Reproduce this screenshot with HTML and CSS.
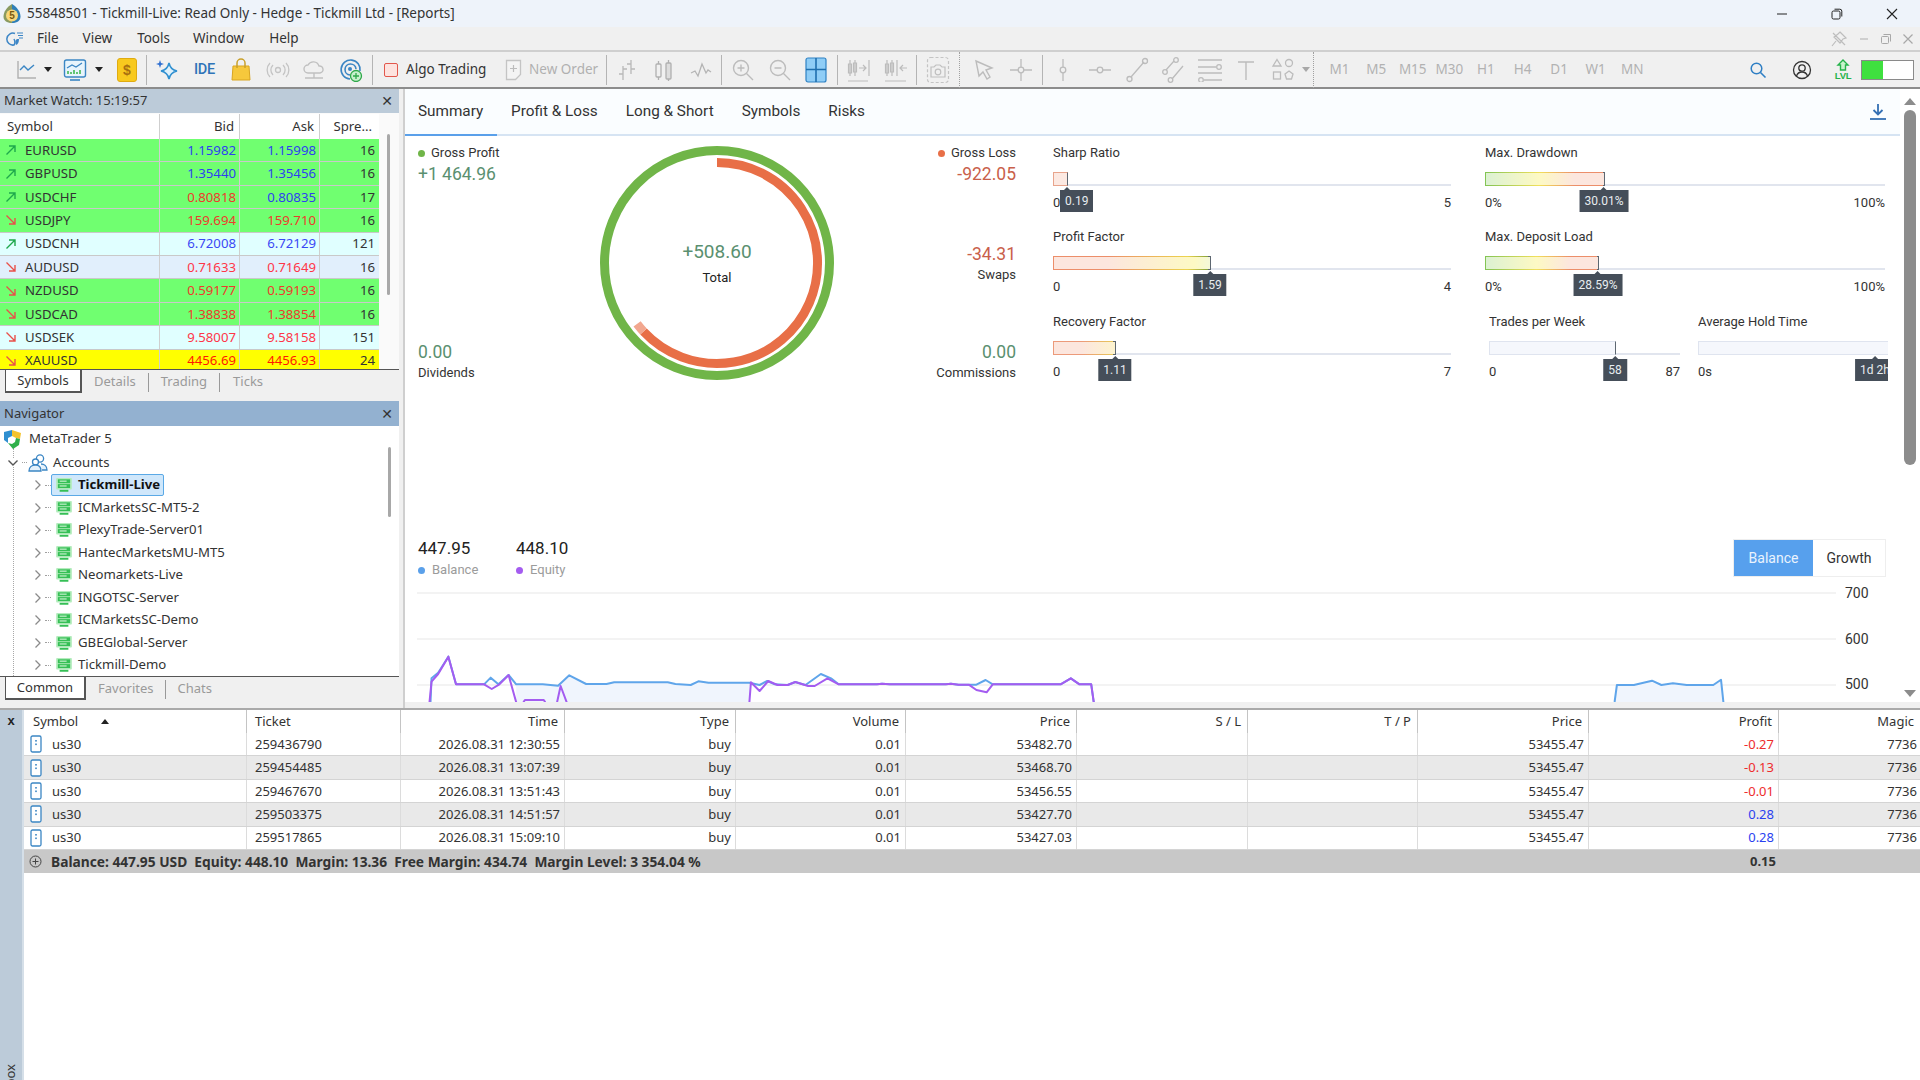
FILE: index.html
```html
<!DOCTYPE html>
<html lang="en">
<head>
<meta charset="utf-8">
<title>55848501 - Tickmill-Live: Read Only - Hedge - Tickmill Ltd - [Reports]</title>
<link rel="stylesheet" href="styles.css">
</head>
<body>
<svg class="defs" width="0" height="0">
  <symbol id="srv" viewBox="0 0 18 16"><rect x="0" y="0" width="18" height="13" rx="1" fill="#b4ecbd"/><rect x="2" y="1.5" width="14" height="4.5" fill="#35bf55"/><rect x="2" y="7" width="14" height="4.5" fill="#35bf55"/><rect x="4" y="3" width="8" height="1.200" fill="#d8f6dc"/><rect x="4" y="8.500" width="8" height="1.200" fill="#d8f6dc"/><rect x="4" y="13.500" width="10" height="2.200" fill="#35bf55"/></symbol>
  <symbol id="chev" viewBox="0 0 8 12"><path d="M1.5 1.5 6 6l-4.5 4.500" fill="none" stroke="#8a8a8a" stroke-width="1.3"/></symbol>
  <symbol id="aup" viewBox="0 0 14 14"><path d="M2.5 11.5 11 3M5 3h6v6" fill="none" stroke="#1ea84c" stroke-width="1.4"/></symbol>
  <symbol id="adn" viewBox="0 0 14 14"><path d="M2.5 2.5 11 11M11 5v6H5" fill="none" stroke="#e8504a" stroke-width="1.4"/></symbol>
  <symbol id="doc" viewBox="0 0 12 18"><rect x="1" y="1" width="10" height="16" rx="1.5" fill="#fff" stroke="#3b86c4" stroke-width="1.3"/><rect x="5.2" y="5" width="1.6" height="1.6" fill="#3b86c4"/><rect x="5.2" y="8.5" width="1.6" height="1.6" fill="#3b86c4"/></symbol>
</svg>

<header class="titlebar">
  <svg class="app-ico" width="20" height="20" viewBox="0 0 20 20"><path d="M10 0C5 3 1.500 8 1.500 12.500c0 4 3 6.500 8.500 6.500V0z" fill="#8a9a60"/><path d="M10 0c5 3 8.500 8 8.500 12.500 0 4-3 6.500-8.500 6.500V0z" fill="#2f7fb8"/><circle cx="10" cy="11.500" r="6" fill="#f7d77a"/><text x="10" y="15.400" class="app-s">5</text></svg>
  <span class="title-text">55848501 - Tickmill-Live: Read Only - Hedge - Tickmill Ltd - [Reports]</span>
  <div class="winctl">
    <span class="winbtn"><svg width="12" height="12" viewBox="0 0 12 12"><path d="M1 6h10" stroke="#222" stroke-width="1"/></svg></span>
    <span class="winbtn"><svg width="12" height="12" viewBox="0 0 12 12"><rect x="1" y="3" width="8" height="8" rx="1.5" fill="none" stroke="#222"/><path d="M3.5 1.2h5.3a2 2 0 0 1 2 2v5.3" fill="none" stroke="#222"/></svg></span>
    <span class="winbtn"><svg width="12" height="12" viewBox="0 0 12 12"><path d="M1 1l10 10M11 1 1 11" stroke="#222" stroke-width="1.1"/></svg></span>
  </div>
</header>

<nav class="menubar">
  <svg class="menu-ico" width="18" height="18" viewBox="0 0 18 18"><path d="M9 3.5A6 6 0 1 0 8 15c1.5-2 1-4 0-6" fill="none" stroke="#3d86c6" stroke-width="1.5"/><path d="M11 9c-2 1-2 4-1 6 2-.5 3-3 3-6z" fill="#3d86c6"/><path d="M11 3h6M12 5.5h5M13 8h4" stroke="#3d86c6" stroke-width="1"/></svg>
  <span class="menu m-file">File</span><span class="menu m-view">View</span><span class="menu m-tools">Tools</span><span class="menu m-window">Window</span><span class="menu m-help">Help</span>
  <div class="mdictl">
    <svg width="18" height="18" viewBox="0 0 18 18"><path d="M10 2l6 6-3 1-3 4-6-6 4-3zM6 11l-4 5M3 3l12 12" fill="none" stroke="#bdbdbd" stroke-width="1.2"/></svg>
    <svg width="12" height="12" viewBox="0 0 12 12"><path d="M2 6h8" stroke="#bdbdbd" stroke-width="1.3"/></svg>
    <svg width="12" height="12" viewBox="0 0 12 12"><rect x="1.5" y="3.5" width="7" height="7" rx="1" fill="none" stroke="#a8a8a8"/><path d="M3.5 1.5h7v7" fill="none" stroke="#a8a8a8"/></svg>
    <svg width="12" height="12" viewBox="0 0 12 12"><path d="M1.5 1.5l9 9M10.5 1.5l-9 9" stroke="#a8a8a8" stroke-width="1.2"/></svg>
  </div>
</nav>

<div class="toolbar">
  <span class="tb tb-first"><svg width="24" height="24" viewBox="0 0 24 24"><path d="M3 3v17h18" fill="none" stroke="#b0b0b0" stroke-width="1.4"/><path d="M5 12l4-4 4 4 6-5" fill="none" stroke="#3b86c4" stroke-width="1.4"/></svg></span>
  <span class="drop drop-first"></span>
  <span class="tb tb-chart"><svg width="24" height="24" viewBox="0 0 24 24"><rect x="1.5" y="2" width="21" height="17" rx="2" fill="#e8f4fc" stroke="#3b86c4" stroke-width="1.4"/><path d="M4 10l5-3 4 2 6-4" fill="none" stroke="#3b86c4" stroke-width="1.3"/><path d="M5 16v-3M8 16v-2M11 16v-4M14 16v-2M17 16v-4" stroke="#39b54a" stroke-width="1.5"/><path d="M7 22h10" stroke="#3b86c4" stroke-width="1.6"/></svg></span>
  <span class="drop"></span>
  <span class="tb tb-dollar"><span class="dollar">$</span></span>
  <i class="sep"></i>
  <span class="tb"><svg width="24" height="24" viewBox="0 0 24 24"><path d="M13 5c1 5 3 7 8 8-5 1-7 3-8 8-1-5-3-7-8-8 5-1 7-3 8-8z" fill="#dff1fb" stroke="#2f8fd0" stroke-width="1.6"/><path d="M4 2l1 3 3 1-3 1-1 3-1-3-3-1 3-1z" fill="#2f6fd0"/></svg></span>
  <span class="tb"><span class="ide">IDE</span></span>
  <span class="tb"><svg width="22" height="24" viewBox="0 0 22 24"><path d="M3 8h16l1 14H2z" fill="#f6c83c" stroke="#d9a520"/><path d="M7 10V5a4 4 0 0 1 8 0v5" fill="none" stroke="#c9a02a" stroke-width="1.5"/></svg></span>
  <span class="tb"><svg width="24" height="24" viewBox="0 0 24 24"><circle cx="12" cy="12" r="2.5" fill="none" stroke="#c4c4c4" stroke-width="1.3"/><path d="M7 7a7 7 0 0 0 0 10M17 7a7 7 0 0 1 0 10M4 5a10 10 0 0 0 0 14M20 5a10 10 0 0 1 0 14" fill="none" stroke="#c4c4c4" stroke-width="1.3"/></svg></span>
  <span class="tb"><svg width="24" height="24" viewBox="0 0 24 24"><path d="M6 15a4 4 0 0 1 0-8 6 6 0 0 1 11 1 3.5 3.5 0 0 1 1 7z" fill="none" stroke="#c0c0c0" stroke-width="1.4"/><path d="M12 15v5M3 20h18" stroke="#c0c0c0" stroke-width="1.4"/></svg></span>
  <span class="tb"><svg width="24" height="24" viewBox="0 0 24 24"><path d="M11 21a9.500 9.500 0 1 1 10-8M11 17a5.500 5.500 0 1 1 6-6" fill="none" stroke="#3b86c4" stroke-width="1.6"/><circle cx="11" cy="11" r="2" fill="#3b86c4"/><circle cx="17" cy="18" r="5.500" fill="#c8f0cd" stroke="#2fa84a" stroke-width="1.3"/><path d="M17 15v6M14 18h6" stroke="#2fa84a" stroke-width="1.3"/></svg></span>
  <i class="sep"></i>
  <span class="tb-text tb-algo"><span class="algo-box"></span>Algo Trading</span>
  <span class="tb-text tb-new"><svg width="17" height="22" viewBox="0 0 17 22"><path d="M1.500 1.500h14v14l-5 5h-9z" fill="#f4f4f4" stroke="#c4c4c4" stroke-width="1.3"/><path d="M8.500 6v7M5 9.500h7" stroke="#bcbcbc" stroke-width="1.2"/></svg>New Order</span>
  <i class="sep"></i>
  <span class="tb"><svg width="20" height="24" viewBox="0 0 20 24"><path d="M6 8v14M6 16H2M6 11h4M14 2v14M14 6h-4M14 11h4" fill="none" stroke="#b8b8b8" stroke-width="1.3"/></svg></span>
  <span class="tb"><svg width="20" height="24" viewBox="0 0 20 24"><rect x="2" y="6" width="5" height="13" rx="1" fill="none" stroke="#b0b0b0" stroke-width="1.3"/><rect x="12" y="5" width="5" height="16" rx="1" fill="#ddd" stroke="#b0b0b0" stroke-width="1.3"/><path d="M4.500 3v3M4.500 19v3M14.500 2v3M14.500 21v2" stroke="#b0b0b0" stroke-width="1.3"/></svg></span>
  <span class="tb"><svg width="22" height="16" viewBox="0 0 22 16"><path d="M1 11l4-2 3 5 4-12 4 9 2-3 3 2" fill="none" stroke="#b4b4b4" stroke-width="1.3"/></svg></span>
  <i class="sep"></i>
  <span class="tb"><svg width="24" height="24" viewBox="0 0 24 24"><circle cx="10" cy="10" r="7.500" fill="none" stroke="#bcbcbc" stroke-width="1.4"/><path d="M15.500 15.500 22 22M10 6.500v7M6.500 10h7" stroke="#bcbcbc" stroke-width="1.4"/></svg></span>
  <span class="tb"><svg width="24" height="24" viewBox="0 0 24 24"><circle cx="10" cy="10" r="7.500" fill="none" stroke="#bcbcbc" stroke-width="1.4"/><path d="M15.500 15.500 22 22M6.500 10h7" stroke="#bcbcbc" stroke-width="1.4"/></svg></span>
  <span class="tb"><svg width="22" height="26" viewBox="0 0 22 26"><rect x="1" y="1" width="20" height="24" rx="2" fill="#8fcdf6" stroke="#2f82c4" stroke-width="1.2"/><path d="M11 1v24M1 12.500h20" stroke="#1f6fae" stroke-width="1.6"/></svg></span>
  <i class="sep"></i>
  <span class="tb"><svg width="24" height="26" viewBox="0 0 24 26"><path d="M3 3v16M8 3v16M1.500 7h3v9h-3zM6.500 6h3v9h-3zM12 11h7M16 8l3 3-3 3M22 3v16M1 24h20" fill="none" stroke="#bcbcbc" stroke-width="1.2"/></svg></span>
  <span class="tb"><svg width="24" height="26" viewBox="0 0 24 26"><path d="M3 3v16M8 3v16M1.500 7h3v9h-3zM6.500 6h3v9h-3zM13 3v16M16 11h7M19 8l-3 3 3 3M1 24h21" fill="none" stroke="#bcbcbc" stroke-width="1.2"/></svg></span>
  <i class="sep"></i>
  <span class="tb"><svg width="24" height="28" viewBox="0 0 24 28"><rect x="1.500" y="1.500" width="21" height="25" rx="3" fill="none" stroke="#c4c4c4" stroke-width="1.2" stroke-dasharray="3 2"/><path d="M5 11h3l2-2h4l2 2h3v10H5z" fill="none" stroke="#c0c0c0" stroke-width="1.2"/><circle cx="12" cy="16" r="2.800" fill="none" stroke="#c0c0c0" stroke-width="1.2"/></svg></span>
  <i class="sep sep-dot sep-cam"></i>
  <span class="tb"><svg width="20" height="22" viewBox="0 0 20 22"><path d="M2 2l16 7-6 2 4 7-3 2-4-7-4 4z" fill="#f0f0f0" stroke="#bcbcbc" stroke-width="1.4"/></svg></span>
  <span class="tb"><svg width="24" height="24" viewBox="0 0 24 24"><path d="M12 1v8M12 15v8M1 12h8M15 12h8" stroke="#bcbcbc" stroke-width="1.3"/><circle cx="12" cy="12" r="2.800" fill="none" stroke="#bcbcbc" stroke-width="1.3"/></svg></span>
  <i class="sep"></i>
  <span class="tb"><svg width="24" height="24" viewBox="0 0 24 24"><path d="M12 1v8M12 15v8" stroke="#bcbcbc" stroke-width="1.3"/><circle cx="12" cy="12" r="2.800" fill="none" stroke="#bcbcbc" stroke-width="1.3"/></svg></span>
  <span class="tb"><svg width="24" height="24" viewBox="0 0 24 24"><path d="M1 12h8M15 12h8" stroke="#bcbcbc" stroke-width="1.3"/><circle cx="12" cy="12" r="2.800" fill="none" stroke="#bcbcbc" stroke-width="1.3"/></svg></span>
  <span class="tb"><svg width="24" height="26" viewBox="0 0 24 26"><path d="M6 20 19 5" stroke="#bcbcbc" stroke-width="1.3"/><circle cx="4.500" cy="22" r="2.500" fill="none" stroke="#bcbcbc" stroke-width="1.3"/><circle cx="20" cy="4" r="2.500" fill="none" stroke="#bcbcbc" stroke-width="1.3"/></svg></span>
  <span class="tb"><svg width="24" height="26" viewBox="0 0 24 26"><path d="M5 13 13 4M11 22 22 9" stroke="#bcbcbc" stroke-width="1.3"/><circle cx="4" cy="15" r="2.300" fill="none" stroke="#bcbcbc" stroke-width="1.3"/><circle cx="15" cy="3" r="2.300" fill="none" stroke="#bcbcbc" stroke-width="1.3"/><circle cx="9.500" cy="23" r="2.300" fill="none" stroke="#bcbcbc" stroke-width="1.3"/></svg></span>
  <span class="tb"><svg width="26" height="24" viewBox="0 0 26 24"><path d="M1 2h24M1 9h18M1 15h24M7 22h18" stroke="#bcbcbc" stroke-width="1.4"/><circle cx="22" cy="9" r="2.300" fill="none" stroke="#bcbcbc" stroke-width="1.300"/><circle cx="4" cy="22" r="2.300" fill="none" stroke="#bcbcbc" stroke-width="1.300"/></svg></span>
  <span class="tb"><svg width="18" height="20" viewBox="0 0 18 20"><path d="M1 2h16M9 2v18" stroke="#bcbcbc" stroke-width="1.400"/></svg></span>
  <span class="tb tb-shapes"><svg width="24" height="24" viewBox="0 0 24 24"><path d="M6 1.500 10 8H2z" fill="none" stroke="#bcbcbc" stroke-width="1.300"/><circle cx="18" cy="5" r="3.500" fill="none" stroke="#bcbcbc" stroke-width="1.300"/><rect x="2.500" y="14" width="7" height="7" fill="none" stroke="#bcbcbc" stroke-width="1.300"/><path d="M18 13l4 3-1.500 5h-5L14 16z" fill="none" stroke="#bcbcbc" stroke-width="1.300"/></svg></span>
  <span class="drop drop-off"></span>
  <i class="sep sep-dot sep-tf"></i>
  <div class="tfs"><span>M1</span><span>M5</span><span>M15</span><span>M30</span><span>H1</span><span>H4</span><span>D1</span><span>W1</span><span>MN</span></div>
  <div class="tb-right">
    <span class="tb-r tb-search"><svg width="18" height="18" viewBox="0 0 18 18"><circle cx="7.500" cy="7.500" r="5.300" fill="none" stroke="#2f7fc4" stroke-width="1.500"/><path d="m11.500 11.500 5 5" stroke="#2f7fc4" stroke-width="1.600"/></svg></span>
    <span class="tb-r tb-user"><svg width="20" height="20" viewBox="0 0 20 20"><circle cx="10" cy="10" r="8.500" fill="none" stroke="#333" stroke-width="1.300"/><circle cx="10" cy="8" r="3.200" fill="none" stroke="#333" stroke-width="1.300"/><path d="M4.500 16c1-3 3-4 5.500-4s4.500 1 5.500 4" fill="none" stroke="#333" stroke-width="1.300"/></svg></span>
    <span class="lvl"><svg width="14" height="12" viewBox="0 0 14 12"><path d="M7 1 12 6H9.500v5h-5V6H2z" fill="#c8f3cc" stroke="#25b34a" stroke-width="1.400"/></svg><b>LVL</b></span>
    <span class="meter"><i class="meter-fill"></i></span>
  </div>
</div>

<main class="workspace">
  <aside class="leftcol">
    <section class="panel mw">
      <div class="panel-head mw-head"><span>Market Watch: 15:19:57</span><b class="panel-x">✕</b></div>
      <div class="panel-body">
        <div class="mw-table">
          <div class="mw-row mw-hd"><span>Symbol</span><span class="r">Bid</span><span class="r">Ask</span><span class="r">Spre...</span></div>
          <div class="mw-row g"><span class="sym"><svg width="14" height="14"><use href="#aup"/></svg>EURUSD</span><span class="r bl">1.15982</span><span class="r bl">1.15998</span><span class="r">16</span></div>
          <div class="mw-row g"><span class="sym"><svg width="14" height="14"><use href="#aup"/></svg>GBPUSD</span><span class="r bl">1.35440</span><span class="r bl">1.35456</span><span class="r">16</span></div>
          <div class="mw-row g"><span class="sym"><svg width="14" height="14"><use href="#aup"/></svg>USDCHF</span><span class="r rd">0.80818</span><span class="r bl">0.80835</span><span class="r">17</span></div>
          <div class="mw-row g"><span class="sym"><svg width="14" height="14"><use href="#adn"/></svg>USDJPY</span><span class="r rd">159.694</span><span class="r rd">159.710</span><span class="r">16</span></div>
          <div class="mw-row c"><span class="sym"><svg width="14" height="14"><use href="#aup"/></svg>USDCNH</span><span class="r bl">6.72008</span><span class="r bl">6.72129</span><span class="r">121</span></div>
          <div class="mw-row b"><span class="sym"><svg width="14" height="14"><use href="#adn"/></svg>AUDUSD</span><span class="r rd">0.71633</span><span class="r rd">0.71649</span><span class="r">16</span></div>
          <div class="mw-row g"><span class="sym"><svg width="14" height="14"><use href="#adn"/></svg>NZDUSD</span><span class="r rd">0.59177</span><span class="r rd">0.59193</span><span class="r">16</span></div>
          <div class="mw-row g"><span class="sym"><svg width="14" height="14"><use href="#adn"/></svg>USDCAD</span><span class="r rd">1.38838</span><span class="r rd">1.38854</span><span class="r">16</span></div>
          <div class="mw-row c"><span class="sym"><svg width="14" height="14"><use href="#adn"/></svg>USDSEK</span><span class="r rd">9.58007</span><span class="r rd">9.58158</span><span class="r">151</span></div>
          <div class="mw-row y"><span class="sym"><svg width="14" height="14"><use href="#adn"/></svg>XAUUSD</span><span class="r rd">4456.69</span><span class="r rd">4456.93</span><span class="r">24</span></div>
        </div>
        <div class="lane"><i class="thumb thumb-mw"></i></div>
      </div>
      <div class="ptabs">
        <span class="ptab on ptab-sym">Symbols</span><span class="ptab">Details</span><i class="ptab-sep"></i><span class="ptab">Trading</span><i class="ptab-sep"></i><span class="ptab ptab-last">Ticks</span>
      </div>
    </section>
    <section class="panel nav">
      <div class="panel-head nav-head"><span>Navigator</span><b class="panel-x">✕</b></div>
      <div class="panel-body nav-body">
        <div class="tree">
          <div class="tree-row t0"><svg width="20" height="20" viewBox="0 0 20 20"><path d="M1 3l8-2v6L5 9v5L1 11z" fill="#2f8fd0"/><path d="M9 1l9 3-1 6-4-1-4-2z" fill="#f4c32c"/><path d="M13 9l4 1-1 6-6 4-5-6 4 1 3-2z" fill="#2fb04a"/></svg><span>MetaTrader 5</span></div>
          <div class="tree-row t1"><svg class="down" width="12" height="8" viewBox="0 0 12 8"><path d="M1.500 1.500 6 6l4.500-4.500" fill="none" stroke="#555" stroke-width="1.400"/></svg><i class="conn c-short"></i><svg class="acc" width="20" height="20" viewBox="0 0 20 20"><circle cx="12" cy="5.500" r="3.600" fill="#fff" stroke="#3b86c4" stroke-width="1.300"/><circle cx="7.500" cy="9" r="3" fill="#fff" stroke="#3b86c4" stroke-width="1.300"/><path d="M1 18c0-4 3-6 6.500-6S13 14 13 18zM13 11c3 0 6 2 6 6h-5" fill="#e4f1fb" stroke="#3b86c4" stroke-width="1.300"/></svg><span>Accounts</span></div>
          <div class="tree-row t2"><svg class="chev" width="8" height="12"><use href="#chev"/></svg><i class="conn"></i><span class="sel"><svg width="16" height="14"><use href="#srv"/></svg><b>Tickmill-Live</b></span></div>
          <div class="tree-row t2"><svg class="chev" width="8" height="12"><use href="#chev"/></svg><i class="conn"></i><span class="item"><svg width="16" height="14"><use href="#srv"/></svg>ICMarketsSC-MT5-2</span></div>
          <div class="tree-row t2"><svg class="chev" width="8" height="12"><use href="#chev"/></svg><i class="conn"></i><span class="item"><svg width="16" height="14"><use href="#srv"/></svg>PlexyTrade-Server01</span></div>
          <div class="tree-row t2"><svg class="chev" width="8" height="12"><use href="#chev"/></svg><i class="conn"></i><span class="item"><svg width="16" height="14"><use href="#srv"/></svg>HantecMarketsMU-MT5</span></div>
          <div class="tree-row t2"><svg class="chev" width="8" height="12"><use href="#chev"/></svg><i class="conn"></i><span class="item"><svg width="16" height="14"><use href="#srv"/></svg>Neomarkets-Live</span></div>
          <div class="tree-row t2"><svg class="chev" width="8" height="12"><use href="#chev"/></svg><i class="conn"></i><span class="item"><svg width="16" height="14"><use href="#srv"/></svg>INGOTSC-Server</span></div>
          <div class="tree-row t2"><svg class="chev" width="8" height="12"><use href="#chev"/></svg><i class="conn"></i><span class="item"><svg width="16" height="14"><use href="#srv"/></svg>ICMarketsSC-Demo</span></div>
          <div class="tree-row t2"><svg class="chev" width="8" height="12"><use href="#chev"/></svg><i class="conn"></i><span class="item"><svg width="16" height="14"><use href="#srv"/></svg>GBEGlobal-Server</span></div>
          <div class="tree-row t2"><svg class="chev" width="8" height="12"><use href="#chev"/></svg><i class="conn"></i><span class="item"><svg width="16" height="14"><use href="#srv"/></svg>Tickmill-Demo</span></div>
        </div>
        <div class="lane"><i class="thumb thumb-nav"></i></div>
      </div>
      <div class="ptabs">
        <span class="ptab on ptab-com">Common</span><span class="ptab">Favorites</span><i class="ptab-sep"></i><span class="ptab ptab-chats">Chats</span>
      </div>
    </section>
  </aside>

  <section class="report">
    <div class="report-main">
      <div class="rtabs">
        <span class="rtab on">Summary</span><span class="rtab">Profit &amp; Loss</span><span class="rtab">Long &amp; Short</span><span class="rtab">Symbols</span><span class="rtab">Risks</span>
        <svg class="dl" width="18" height="18" viewBox="0 0 18 18"><path d="M9 1v10M4.500 7 9 11.500 13.500 7" fill="none" stroke="#3470b4" stroke-width="1.800"/><path d="M1 16h16" stroke="#3470b4" stroke-width="1.800"/></svg>
      </div>
      <div class="summary">
        <div class="donut-block">
          <div class="side">
            <div><div class="lbl"><i class="dot dot-g"></i>Gross Profit</div><div class="val pos">+1 464.96</div></div>
            <div><div class="val pos">0.00</div><div class="lbl">Dividends</div></div>
          </div>
          <div class="donut">
            <svg width="234" height="234" viewBox="0 0 234 234"><circle cx="117" cy="117" r="112.500" fill="none" stroke="#70b548" stroke-width="9"/><path d="M117 16.500A100.500 100.500 0 1 1 43.500 185.500" fill="none" stroke="#e86f47" stroke-width="9"/><path d="M43.500 185.500A100.500 100.500 0 0 1 37.100 177.900" fill="none" stroke="#f2a78f" stroke-width="9"/></svg>
            <div class="donut-c"><div class="total pos">+508.60</div><div class="total-l">Total</div></div>
          </div>
          <div class="side side-r">
            <div><div class="lbl"><i class="dot dot-o"></i>Gross Loss</div><div class="val neg">-922.05</div></div>
            <div><div class="val neg">-34.31</div><div class="lbl">Swaps</div></div>
            <div><div class="val pos">0.00</div><div class="lbl">Commissions</div></div>
          </div>
        </div>
        <div class="metrics">
          <div class="metric">
            <div class="m-l">Sharp Ratio</div>
            <div class="bar"><div class="fill f-pink" style="width:15px"><span class="tip tip-sharp">0.19</span></div></div>
            <div class="rng"><span>0</span><span>5</span></div>
          </div>
          <div class="metric">
            <div class="m-l">Max. Drawdown</div>
            <div class="bar"><div class="fill f-gyr" style="width:120px"><span class="tip">30.01%</span></div></div>
            <div class="rng"><span>0%</span><span>100%</span></div>
          </div>
          <div class="metric">
            <div class="m-l">Profit Factor</div>
            <div class="bar"><div class="fill f-ryg" style="width:158px"><span class="tip">1.59</span></div></div>
            <div class="rng"><span>0</span><span>4</span></div>
          </div>
          <div class="metric">
            <div class="m-l">Max. Deposit Load</div>
            <div class="bar"><div class="fill f-gyr" style="width:114px"><span class="tip">28.59%</span></div></div>
            <div class="rng"><span>0%</span><span>100%</span></div>
          </div>
          <div class="metric">
            <div class="m-l">Recovery Factor</div>
            <div class="bar"><div class="fill f-ry" style="width:63px"><span class="tip">1.11</span></div></div>
            <div class="rng"><span>0</span><span>7</span></div>
          </div>
          <div class="metric pair">
            <div class="sub sub-t">
              <div class="m-l">Trades per Week</div>
              <div class="bar"><div class="fill f-gray" style="width:127px"><span class="tip">58</span></div></div>
              <div class="rng"><span>0</span><span>87</span></div>
            </div>
            <div class="sub sub-a">
              <div class="m-l">Average Hold Time</div>
              <div class="bar"><div class="fill f-gray" style="width:200px"><span class="tip tip-avg">1d 2h</span></div></div>
              <div class="rng"><span>0s</span></div>
            </div>
          </div>
        </div>
      </div>
      <div class="chart">
        <svg class="plot" width="1495" height="172" viewBox="0 0 1495 172">
          <path class="grid" d="M12 63H1431M12 109H1431M12 155H1431"/>
          <g transform="scale(.5102 .33333)">
            <path class="area" d="M218 463H270L300 467L322 436L355 462H395L410 457H515L530 462L560 465L575 454L595 458H675V517H218Z"/>
            <path class="ln-b" vector-effect="non-scaling-stroke" d="M50 517L52 445L65 428L85 380L100 463H155L168 443L183 463L203 435L218 463H270L300 467L322 436L355 462H395L410 457H515L530 462L560 465L575 454L595 458H675L695 465L710 453L725 463L750 465L765 456L785 465L815 432L835 445L850 463H925L935 461L950 463H1060L1070 461L1085 464H1120L1138 450L1152 463H1285L1305 445L1322 463H1345L1350 517"/>
            <path class="ln-e" vector-effect="non-scaling-stroke" d="M48 517L52 455L65 432L85 380L100 463H155L170 477L185 463L203 435L218 517M232 517L235 510H272L275 517M298 517L305 468L317 517M675 517L678 457L695 483L712 453L730 465H750L765 456L790 468H803L828 445L850 463H925L935 461L950 463H1060L1070 461L1085 464H1105L1120 480L1140 487L1152 463H1285L1305 445L1322 463H1345L1350 517"/>
          </g>
          <path class="area" d="M1209.600 172L1211.900 155H1228.900L1247 150.700L1256.400 155L1267.900 153.300L1281.700 155H1308.300L1316 149.700L1318.400 172Z"/>
          <path class="ln-b" d="M1209.600 172L1211.900 155H1228.900L1247 150.700L1256.400 155L1267.900 153.300L1281.700 155H1308.300L1316 149.700L1318.400 172"/>
          <text class="ax" x="1440" y="68">700</text>
          <text class="ax" x="1440" y="114">600</text>
          <text class="ax" x="1440" y="159">500</text>
        </svg>
        <div class="chart-head">
          <div class="leg leg-b"><div class="leg-v">447.95</div><div class="leg-l"><i class="dot dot-b"></i>Balance</div></div>
          <div class="leg"><div class="leg-v">448.10</div><div class="leg-l"><i class="dot dot-p"></i>Equity</div></div>
          <div class="toggle"><span class="tg on">Balance</span><span class="tg">Growth</span></div>
        </div>
      </div>
    </div>
    <div class="vscroll">
      <i class="tri tri-up"></i>
      <i class="vthumb"></i>
      <i class="tri tri-dn"></i>
    </div>
  </section>
</main>

<section class="toolbox">
  <aside class="tbx-side"><b class="tbx-x">x</b><span class="tbx-name">Toolbox</span></aside>
  <div class="trades">
    <div class="tr thd"><span class="sym-h">Symbol<i class="sort"></i></span><span class="tck">Ticket</span><span class="r">Time</span><span class="r">Type</span><span class="r">Volume</span><span class="r">Price</span><span class="r">S / L</span><span class="r">T / P</span><span class="r">Price</span><span class="r">Profit</span><span class="r">Magic</span></div>
    <div class="tr"><span class="t-s"><svg width="12" height="18"><use href="#doc"/></svg>us30</span><span>259436790</span><span class="r">2026.08.31 12:30:55</span><span class="r">buy</span><span class="r">0.01</span><span class="r">53482.70</span><span></span><span></span><span class="r">53455.47</span><span class="r loss">-0.27</span><span class="r">7736</span></div>
    <div class="tr z"><span class="t-s"><svg width="12" height="18"><use href="#doc"/></svg>us30</span><span>259454485</span><span class="r">2026.08.31 13:07:39</span><span class="r">buy</span><span class="r">0.01</span><span class="r">53468.70</span><span></span><span></span><span class="r">53455.47</span><span class="r loss">-0.13</span><span class="r">7736</span></div>
    <div class="tr"><span class="t-s"><svg width="12" height="18"><use href="#doc"/></svg>us30</span><span>259467670</span><span class="r">2026.08.31 13:51:43</span><span class="r">buy</span><span class="r">0.01</span><span class="r">53456.55</span><span></span><span></span><span class="r">53455.47</span><span class="r loss">-0.01</span><span class="r">7736</span></div>
    <div class="tr z"><span class="t-s"><svg width="12" height="18"><use href="#doc"/></svg>us30</span><span>259503375</span><span class="r">2026.08.31 14:51:57</span><span class="r">buy</span><span class="r">0.01</span><span class="r">53427.70</span><span></span><span></span><span class="r">53455.47</span><span class="r gain">0.28</span><span class="r">7736</span></div>
    <div class="tr"><span class="t-s"><svg width="12" height="18"><use href="#doc"/></svg>us30</span><span>259517865</span><span class="r">2026.08.31 15:09:10</span><span class="r">buy</span><span class="r">0.01</span><span class="r">53427.03</span><span></span><span></span><span class="r">53455.47</span><span class="r gain">0.28</span><span class="r">7736</span></div>
    <div class="tr ttl"><span class="ttl-txt"><svg width="13" height="13" viewBox="0 0 13 13"><circle cx="6.500" cy="6.500" r="5.500" fill="none" stroke="#444"/><path d="M6.500 3.500v6M3.500 6.500h6" stroke="#444"/></svg>Balance: 447.95 USD&nbsp; Equity: 448.10&nbsp; Margin: 13.36&nbsp; Free Margin: 434.74&nbsp; Margin Level: 3 354.04 %</span><span class="r ttl-p">0.15</span></div>
  </div>
</section>
</body>
</html>
```
FILE: styles.css
```css
* { box-sizing: border-box; }
html, body { margin: 0; width: 1920px; height: 1080px; overflow: hidden; }
body {
  background: #f0f0f0;
  color: #333;
  font: 13px/1.2 "Noto Sans", "Open Sans", sans-serif;
  display: flex;
  flex-direction: column;
}
.defs { position: absolute; }
i { display: block; font-style: normal; }

/* title bar */
.titlebar { height: 27px; flex: none; background: #eef3fa; display: flex; align-items: center; padding-left: 2px; }
.app-ico { flex: none; }
.app-s { font: 700 10px "Liberation Sans", sans-serif; fill: #7a5a10; text-anchor: middle; }
.title-text { margin-left: 5px; font-size: 13.5px; color: #333; }
.winctl { margin-left: auto; display: flex; padding-right: 1px; }
.winbtn { width: 55px; height: 27px; display: flex; align-items: center; justify-content: center; }

/* menu */
.menubar { height: 25px; flex: none; display: flex; align-items: center; position: relative; padding-left: 6px; border-bottom: 2px solid #cfcfcf; }
.menu { font-size: 13.5px; color: #333; }
.m-file { margin-left: 13px; } .m-view { margin-left: 24px; } .m-tools { margin-left: 25px; } .m-window { margin-left: 23px; } .m-help { margin-left: 25px; }
.mdictl { margin-left: auto; display: flex; align-items: center; gap: 10px; padding-right: 6px; }

/* toolbar */
.toolbar { height: 37px; flex: none; display: flex; align-items: center; border-bottom: 2px solid #8c8c8c; padding-left: 15px; }
.tb { width: 36.6px; height: 30px; flex: none; display: flex; align-items: center; justify-content: center; }
.tb-first { width: 24px; }
.tb-chart { width: 36px; margin-left: 3px; }
.tb-dollar { width: 33px; margin-left: 5.500px; }
.drop-first { margin-left: 3px; }
.drop { width: 12px; flex: none; height: 30px; display: flex; align-items: center; justify-content: center; }
.drop::after { content: ""; border: 4px solid transparent; border-top: 5px solid #222; margin-top: 4px; }
.drop-off { width: 10px; }
.drop-off::after { border-top-color: #a8a8a8; }
.dollar { width: 20px; height: 24px; border-radius: 3px; background: #f8c91e; border: 1px solid #e0ab10; color: #a86f10; font: 700 14px/22px "Liberation Sans", sans-serif; text-align: center; }
.ide { color: #2f74b8; font: 500 14.500px Roboto, sans-serif; letter-spacing: -.3px; }
.sep { width: 1px; height: 30px; margin: 0 2.5px; background: #b4b4b4; flex: none; }
.sep-dot { background: none; border-left: 1px dotted #a0a0a0; height: 36px; }
.sep-cam { margin-right: 6px; }
.sep-tf { margin-left: 2px; margin-right: 7px; }
.tb-text { flex: none; display: flex; align-items: center; height: 30px; font-size: 13.5px; }
.tb-algo { width: 128px; padding-left: 9px; gap: 8px; color: #333; }
.algo-box { width: 14px; height: 14px; border: 1.5px solid #e2574c; border-radius: 2px; background: #fde3df; }
.tb-new { width: 100px; gap: 7px; color: #b0b0b0; padding-left: 2px; }
.tfs { display: flex; }
.tfs span { width: 36.6px; text-align: center; color: #b2b2b2; font-size: 13.5px; }
.tb-right { margin-left: auto; display: flex; align-items: center; padding-right: 6px; }
.tb-r { display: flex; }
.tb-search { margin-right: 25px; }
.tb-user { margin-right: 23px; }
.lvl { display: flex; flex-direction: column; align-items: center; margin-right: 10px; width: 16px; }
.lvl b { font: 700 9.5px/10px "Liberation Sans", sans-serif; color: #25b34a; letter-spacing: -.3px; }
.meter { width: 53px; height: 20px; border: 1px solid #8a8a8a; background: #fff; display: block; }
.meter-fill { width: 21px; height: 18px; background: #3fe03f; }

/* workspace */
.workspace { height: 619px; flex: none; display: flex; }
.leftcol { width: 405px; flex: none; padding-right: 4px; border-right: 2px solid #cfcfcf; display: flex; flex-direction: column; }
.panel { display: flex; flex-direction: column; }
.panel-head { display: flex; justify-content: space-between; align-items: center; padding: 0 4px; flex: none; font-size: 13px; color: #333; }
.panel-x { font: 700 14px "DejaVu Sans", sans-serif; color: #333; margin-right: 2px; }
.mw-head { height: 24px; background: #bccbd9; }
.nav { margin-top: 1px; }
.nav-head { height: 25px; background: #93b1d0; }
.panel-body { display: flex; }
.mw .panel-body { height: 256px; padding-top: 1px; background: #fafafa; overflow: hidden; }
.nav-body { height: 250px; background: #fff; overflow: hidden; }
.lane { flex: 1; position: relative; }
.thumb { position: absolute; left: 8px; width: 3px; background: #a8a8a8; border-radius: 2px; }
.thumb-mw { top: 20px; height: 161px; }
.thumb-nav { top: 21px; height: 70px; }

.mw-table { width: 379px; flex: none; }
.mw-row { display: grid; grid-template-columns: 160px 80px 80px 59px; height: 23.4px; align-items: stretch; border-bottom: 1px solid #c9c9c9; font-size: 13.2px; color: #333; }
.mw-row > span { display: flex; align-items: center; padding: 1px 3px 0 4px; border-right: 1px solid #cfcfcf; white-space: nowrap; }
.mw-row > span.r { justify-content: flex-end; }
.mw-row > span:last-child { border-right: 0; padding-right: 4px; }
.mw-hd { height: 25px; background: #fff; border-bottom: 0; }
.mw-hd > span { padding-left: 7px; padding-right: 5px; }
.mw-hd > span:last-child { padding-right: 7px; }
.sym svg { margin-right: 7px; flex: none; margin-top: -1px; }
.g { background: #70ff70; }
.c { background: #e0ffff; }
.b { background: #e1effc; }
.y { background: #ffff00; }
.bl { color: #2d3ff0; }
.rd { color: #ee3a2c; }
.c .rd, .b .rd { color: #ff3648; }
.c .bl { color: #3a48f5; }
.y .rd { color: #ff1a00; }

.ptabs { height: 31px; flex: none; display: flex; align-items: flex-start; border-top: 1px solid #555; background: #f0f0f0; padding-left: 5px; font-size: 13px; color: #9a9a9a; position: relative; }
.ptab { height: 23px; display: flex; align-items: center; padding: 0 12px; }
.ptab.on { background: #fff; color: #333; border: 1px solid #555; border-top: 0; border-right-width: 2px; border-bottom-width: 2px; }
.ptab-sym { width: 77px; justify-content: center; }
.ptab-com { width: 81px; justify-content: center; }
.ptab-last { padding-left: 13px; }
.ptab-chats { padding-left: 11px; }
.ptab-sep { width: 1px; height: 19px; margin-top: 3px; background: #999; }

/* navigator tree */
.tree { width: 380px; flex: none; position: relative; }
.tree::before { content: ""; position: absolute; left: 13px; top: 22px; bottom: 0; border-left: 1px dotted #a8a8a8; }
.tree-row { height: 22.5px; display: flex; align-items: center; white-space: nowrap; font-size: 13.2px; position: relative; }
.t0 { padding-left: 3px; gap: 6px; height: 25px; }
.t1 { padding-left: 7px; height: 23px; }
.t1 .down { margin-right: 2px; background: #fff; }
.acc { margin-left: 1px; margin-right: 5px; }
.t2 { padding-left: 34px; }
.conn { width: 6px; border-top: 1px dotted #a0a0a0; margin-left: 3px; }
.c-short { width: 5px; margin-left: 1px; }
.item { display: flex; align-items: center; gap: 6px; padding-left: 5px; color: #333; }
.sel { display: flex; align-items: center; gap: 6px; height: 22px; padding: 0 3px 0 4px; background: #cfe7fb; border: 1px solid #5aa9e6; border-radius: 2px; color: #111; }
.sel b { font-weight: 700; }

/* report */
.report { flex: 1; min-width: 0; display: flex; background: #fff; height: 613px; overflow: hidden; }
.report-main { width: 1495px; flex: none; font-family: Roboto, sans-serif; overflow: hidden; }
.rtabs { height: 47px; display: flex; align-items: center; background: #fafdff; border-bottom: 2px solid #d6e4f3; position: relative; padding-bottom: 2px; }
.rtab { padding: 0 14px; font-size: 15.300px; color: #333; height: 45px; display: flex; align-items: center; margin-bottom: -2px; }
.rtab.on { position: relative; padding: 0 13px; width: 92px; }
.rtab.on::after { content: ""; position: absolute; left: 0; right: 0; bottom: -2px; height: 2px; background: #5aa0ea; }
.dl { position: absolute; left: 1464px; top: 14px; }
.summary { height: 394px; display: flex; align-items: flex-start; padding: 8px 0 0 13px; }
.donut-block { display: grid; grid-template-columns: 182px 234px 182px; height: 238px; }
.side { display: flex; flex-direction: column; justify-content: space-between; }
.side-r { text-align: right; }
.lbl { font-size: 13px; line-height: 18px; color: #333; display: flex; align-items: center; }
.side-r .lbl { justify-content: flex-end; }
.dot { width: 7px; height: 7px; border-radius: 50%; margin-right: 6px; flex: none; }
.dot-g { background: #70b548; }
.dot-o { background: #e86f47; }
.dot-b { background: #5aa0ea; }
.dot-p { background: #a45cf0; }
.val { font-size: 17.5px; line-height: 24px; }
.pos { color: #5a9070; }
.neg { color: #c9604a; }
.donut { position: relative; margin-top: 2px; height: 234px; }
.donut svg { display: block; }
.donut-c { position: absolute; inset: 0; padding-top: 3px; display: flex; flex-direction: column; align-items: center; justify-content: center; }
.total { font-size: 19px; line-height: 26px; }
.total-l { font-size: 13px; line-height: 26px; color: #222; }

.metrics { margin-left: 37px; display: grid; grid-template-columns: 398px 400px; column-gap: 34px; row-gap: 16.3px; margin-top: 0; }
.metric { font-size: 13px; color: #333; }
.m-l { line-height: 18px; height: 18px; white-space: nowrap; }
.bar { position: relative; height: 14px; margin-top: 10px; }
.bar::before { content: ""; position: absolute; left: 0; right: 0; bottom: 0; height: 2px; background: #e1e5ee; }
.fill { position: absolute; left: 0; top: 0; height: 14px; border: 1px solid #e8a48c; border-right: 1px solid #5d6771; }
.f-pink { background: #fce9e2; }
.f-gyr { background: linear-gradient(90deg, #dcf1d2, #fdf9c4 45%, #fce6de 75%); border-image: linear-gradient(90deg, #82c454, #f1e05c 45%, #ec8e6a 75%, #ec8e6a 98%, #5d6771 98%) 1; }
.f-ryg { background: linear-gradient(90deg, #fce6de 35%, #fdf9c4 90%, #f4f8d8); border-image: linear-gradient(90deg, #ec8e6a 35%, #ecd44e 85%, #88a33c 98%, #5d6771 98%) 1; }
.f-ry { background: linear-gradient(90deg, #fce6de 45%, #fdf3cf); border-image: linear-gradient(90deg, #ec9a7a 45%, #e8c85a 96%, #5d6771 96%) 1; }
.f-gray { background: #f5f7fc; border-color: #dfe4ef #5d6771 #dfe4ef #dfe4ef; }
.tip { position: absolute; left: 100%; top: 17px; transform: translateX(-50%); height: 22px; line-height: 22px; padding: 0 5px; background: #454e59; color: #e8edf0; font-size: 12px; white-space: nowrap; }
.tip::before { content: ""; position: absolute; left: 50%; top: -3px; margin-left: -3px; border: 3px solid transparent; border-top: 0; border-bottom: 3px solid #454e59; }
.tip-sharp { transform: translateX(-7px); }
.tip-sharp::before { left: 7px; }
.tip-avg { left: 176px; }
.rng { display: flex; justify-content: space-between; line-height: 18px; margin-top: 8px; }
.pair { display: flex; padding-left: 4px; }
.sub-t { width: 191px; flex: none; }
.sub-a { width: 190px; flex: none; margin-left: 18px; overflow: hidden; height: 68px; }

.chart { height: 172px; position: relative; overflow: hidden; }
.plot { position: absolute; left: 0; top: 0; }
.grid { stroke: #efefef; stroke-width: 1.5; fill: none; }
.area { fill: #f0f5fd; stroke: none; }
.ln-b { fill: none; stroke: #5fa5ea; stroke-width: 2; stroke-linejoin: round; }
.ln-e { fill: none; stroke: #a45cf0; stroke-width: 2; stroke-linejoin: round; }
.ax { font: 14px Roboto, sans-serif; fill: #333; }
.chart-head { position: relative; display: flex; padding: 7px 14px 0 13px; }
.leg { width: 98px; flex: none; }
.leg-v { font-size: 17px; line-height: 22px; color: #222; }
.leg-l { font-size: 13px; line-height: 20px; color: #9b9b9b; display: flex; align-items: center; margin-top: 1px; }
.leg-l .dot { margin-right: 7px; }
.toggle { margin-left: auto; display: flex; height: 38px; margin-top: 2px; border: 1px solid #eee; background: #fff; }
.tg { width: 72px; display: flex; align-items: center; justify-content: center; font-size: 14px; color: #333; }
.tg.on { width: 79px; background: #57a0ed; color: #eaf3fd; }

.vscroll { flex: 1; position: relative; background: #fff; display: flex; flex-direction: column; align-items: center; padding: 9px 0 0 0; }
.vthumb { width: 12px; height: 355px; flex: none; margin-top: 5px; background: #8c8c8c; border-radius: 6px; }
.tri { width: 0; height: 0; flex: none; border: 6px solid transparent; }
.tri-up { border-bottom: 7px solid #8c8c8c; border-top: 0; }
.tri-dn { border-top: 7px solid #8c8c8c; border-bottom: 0; margin-top: 225px; }

/* toolbox */
.toolbox { flex: 1; min-height: 0; display: flex; border-top: 2px solid #aaa; background: #fff; position: relative; }
.tbx-side { width: 24px; flex: none; background: #bccbd9; border-right: 2px solid #d5dfe8; display: flex; flex-direction: column; align-items: center; overflow: hidden; }
.tbx-x { font: 700 13px "Liberation Sans", sans-serif; color: #222; margin-top: 3px; }
.tbx-name { margin-top: auto; margin-bottom: -32px; writing-mode: vertical-rl; transform: rotate(180deg); font-size: 13px; color: #333; white-space: nowrap; }
.trades { flex: 1; min-width: 0; }
.tr { display: grid; grid-template-columns: 223px 154px 164px 171px 170px 171px 171px 170px 171px 190px 141px; height: 23.4px; align-items: stretch; font-size: 13px; color: #333; border-bottom: 1px solid #d4d4d4; white-space: nowrap; }
.tr > span { display: flex; align-items: center; padding: 1px 4px 0 8px; border-right: 1px solid #dcdcdc; }
.tr > span.r { justify-content: flex-end; }
.tr > span:last-child { border-right: 0; padding-right: 3px; }
.thd { height: 23px; border-bottom: 0; }
.thd > span { border-right: 1px solid #c4c4c4; padding-left: 8px; padding-top: 0; }
.thd > span.r { padding-right: 6px; }
.sym-h { padding-left: 9px !important; }
.tck { padding-left: 8px !important; }
.sort { margin-left: 23px; border: 4px solid transparent; border-top: 0; border-bottom: 5px solid #222; }
.t-s { gap: 10px; padding-left: 6px !important; }
.t-s svg { margin-top: -1px; }
.z { background: #e9e9e9; }
.loss { color: #ee2c2c; }
.gain { color: #2a3ff0; }
.ttl { display: flex; height: 23px; background: #c8c8c8; font-weight: 700; border: 0; font-size: 13.750px; justify-content: space-between; }
.ttl > span { border: 0; }
.ttl-txt { width: 1000px; gap: 9px; padding-left: 5px !important; }
.ttl-txt svg { margin-top: -1px; }
.ttl-p { margin-left: auto; width: 165px; padding-right: 144px !important; font-weight: 700; font-size: 13px; }
```
